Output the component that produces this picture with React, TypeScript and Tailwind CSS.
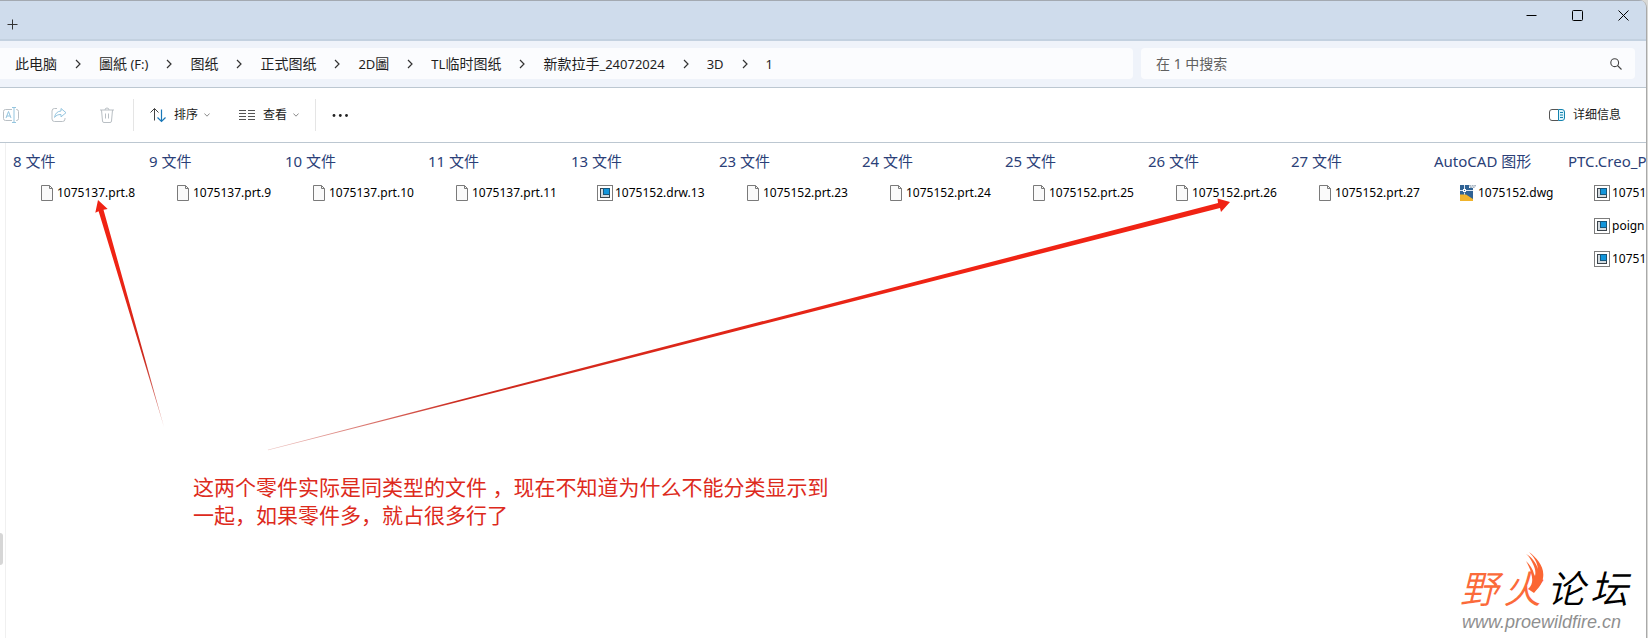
import { Fragment, type ReactNode } from "react";

type FileKind = "blank" | "creo" | "dwg";

type Group = {
    title: string;
    width: string;
    kind: FileKind;
    files: string[];
};

const crumbs = ["此电脑", "圖紙 (F:)", "图纸", "正式图纸", "2D圖", "TL临时图纸", "新款拉手_24072024", "3D", "1"];

const groups: Group[] = [
    { title: "8 文件", width: "w-[136px]", kind: "blank", files: ["1075137.prt.8"] },
    { title: "9 文件", width: "w-[136px]", kind: "blank", files: ["1075137.prt.9"] },
    { title: "10 文件", width: "w-[143px]", kind: "blank", files: ["1075137.prt.10"] },
    { title: "11 文件", width: "w-[143px]", kind: "blank", files: ["1075137.prt.11"] },
    { title: "13 文件", width: "w-[148px]", kind: "creo", files: ["1075152.drw.13"] },
    { title: "23 文件", width: "w-[143px]", kind: "blank", files: ["1075152.prt.23"] },
    { title: "24 文件", width: "w-[143px]", kind: "blank", files: ["1075152.prt.24"] },
    { title: "25 文件", width: "w-[143px]", kind: "blank", files: ["1075152.prt.25"] },
    { title: "26 文件", width: "w-[143px]", kind: "blank", files: ["1075152.prt.26"] },
    { title: "27 文件", width: "w-[143px]", kind: "blank", files: ["1075152.prt.27"] },
    { title: "AutoCAD 图形", width: "w-[134px]", kind: "dwg", files: ["1075152.dwg"] },
    { title: "PTC.Creo_P", width: "w-[136px]", kind: "creo", files: ["10751", "poign", "10751"] },
];

// Latin runs are set one step smaller than the Chinese text next to them
const Mixed = ({ text }: { text: string }) => (
    <>
        {text.split(/([\x20-\x7e]+)/).map((part, i) =>
            i % 2 ? <span key={i} className="text-[13px]">{part}</span> : part
        )}
    </>
);

const ChevronRight = () => (
    <svg className="w-[6px] h-[10px] shrink-0" viewBox="0 0 6 10" fill="none" stroke="#333" strokeWidth="1.2">
        <path d="M1 1l4 4-4 4" />
    </svg>
);

const ChevronDown = () => (
    <svg className="w-[6px] h-[4px] shrink-0" viewBox="0 0 6 4" fill="none" stroke="#8a8a8a" strokeWidth="1">
        <path d="M.4.5L3 3.2 5.6.5" />
    </svg>
);

const FileIcon = ({ kind }: { kind: FileKind }) => {
    if (kind === "creo") {
        return (
            <svg className="w-4 h-4 shrink-0" viewBox="0 0 16 16">
                <rect x=".5" y=".5" width="15" height="15" fill="#fff" stroke="#7c7c7c" />
                <rect x="3.5" y="3.5" width="9" height="9" fill="#d3dbe0" stroke="#3c454c" />
                <rect x="6.5" y="3.5" width="6" height="6" fill="#1296dc" stroke="#17577c" />
            </svg>
        );
    }
    if (kind === "dwg") {
        return (
            <svg className="w-4 h-4 shrink-0" viewBox="0 0 16 16">
                <path d="M0 0h9v3h4v13H0z" fill="#2f6294" />
                <path d="M0 9.5h6L13 14v2H0z" fill="#f0b32b" />
                <path d="M4.500 0v4M4.500 7.500v2M0 5.500h3M6 5.500h7" stroke="#dbe7f2" />
                <rect x="3.500" y="4.500" width="2" height="2" fill="none" stroke="#fff" />
                <path d="M9 .8h7M10 2.200h5" stroke="#8094a8" strokeDasharray="2 .6" />
            </svg>
        );
    }
    return (
        <svg className="w-4 h-4 shrink-0" viewBox="0 0 16 16" fill="#fafafa" stroke="#7a7a7a">
            <path d="M.5.5h8l3 3v12H.5z" />
            <path d="M8.500.5v3h3" fill="none" />
        </svg>
    );
};

const ToolButton = ({ label, children, className = "" }: { label: string; children: ReactNode; className?: string }) => (
    <button type="button" aria-label={label} className={`flex items-center h-8 ${className}`}>
        {children}
    </button>
);

const TitleBar = () => (
    <header className="flex justify-between h-[41px] bg-[#cfdcec] border-t border-t-[#a3a9b1] border-b-2 border-b-[#c3d1e0]">
        <button type="button" aria-label="新建标签页" className="pl-[7px] pt-[8px]">
            <svg className="w-[11px] h-[11px]" viewBox="0 0 11 11" stroke="#333">
                <path d="M5.500.5v10M.5 5.500h10" />
            </svg>
        </button>
        <div className="flex gap-[35px] h-7 pr-[17px] items-center">
            <button type="button" aria-label="最小化">
                <svg className="w-[11px] h-[11px]" viewBox="0 0 11 11" stroke="#000">
                    <path d="M.5 5.500h10" />
                </svg>
            </button>
            <button type="button" aria-label="最大化">
                <svg className="w-[11px] h-[11px]" viewBox="0 0 11 11" stroke="#000" fill="none">
                    <rect x=".5" y=".5" width="10" height="10" rx="1" />
                </svg>
            </button>
            <button type="button" aria-label="关闭">
                <svg className="w-[11px] h-[11px]" viewBox="0 0 11 11" stroke="#000">
                    <path d="M.5.5l10 10M10.500.5l-10 10" />
                </svg>
            </button>
        </div>
    </header>
);

const AddressBar = () => (
    <div className="flex gap-2 h-[47px] pt-[7px] pb-2 pr-[11px] bg-[#eff3fa] border-b border-[#bcc7d1] text-[14px]">
        <nav className="flex grow items-center gap-[18px] pl-[15px] rounded-r bg-[#fbfcfe] text-[#1f1f1f] whitespace-nowrap">
            {crumbs.map((crumb, i) => (
                <Fragment key={crumb}>
                    {i > 0 && <ChevronRight />}
                    <a href="#"><Mixed text={crumb} /></a>
                </Fragment>
            ))}
        </nav>
        <label className="flex w-[494px] shrink-0 items-center pl-[15px] pr-[13px] rounded bg-[#fbfcfe]">
            <input
                type="text"
                aria-label="搜索"
                placeholder="在 1 中搜索"
                className="grow bg-transparent outline-none placeholder:text-[#606060]"
            />
            <svg className="w-3 h-3" viewBox="0 0 12 12" fill="none" stroke="#444" strokeWidth="1.100">
                <circle cx="4.700" cy="4.700" r="3.900" />
                <path d="M7.500 7.500l4 4" />
            </svg>
        </label>
    </div>
);

const Toolbar = () => (
    <div className="flex h-[55px] items-center pl-[3px] pr-[25px] border-b border-[#bcc7d1] bg-white text-xs text-[#1b1b1b]">
        <ToolButton label="重命名">
            <svg className="w-4 h-4" viewBox="0 0 16 16" fill="none" stroke="#b9bfc4">
                <path d="M9 2.500H2.500a2 2 0 0 0-2 2v7a2 2 0 0 0 2 2H9M13 2.500h.5a2 2 0 0 1 2 2v7a2 2 0 0 1-2 2H13" />
                <path d="M3 11l2.500-6.500L8 11M3.800 9h3.400M9 .5h4M11 .5v15M9 15.500h4" stroke="#94c5df" />
            </svg>
        </ToolButton>
        <ToolButton label="共享" className="ml-8">
            <svg className="w-4 h-4" viewBox="0 0 16 16" fill="none" stroke="#b9bfc4" strokeLinejoin="round">
                <path d="M6 1.500H3.500a2.500 2.500 0 0 0-2.500 2.500V12a2.500 2.500 0 0 0 2.500 2.500h8A2.500 2.500 0 0 0 14 12v-1" />
                <path d="M10 1.500l5 4.200-5 4.200V7.500C7 7.400 5 8.400 3.600 10.400 4 6.500 6.500 4.200 10 4z" stroke="#94c5df" />
            </svg>
        </ToolButton>
        <ToolButton label="删除" className="ml-8">
            <svg className="w-4 h-4" viewBox="0 0 16 16" fill="none" stroke="#b9bfc4">
                <path d="M1 3h14M6 3a2 2 0 0 1 4 0M2.500 3l1 11a1.500 1.500 0 0 0 1.500 1.500h6a1.500 1.500 0 0 0 1.500-1.500l1-11M6.500 6.500v5M9.500 6.500v5" />
            </svg>
        </ToolButton>
        <span className="w-px h-8 ml-[18px] mr-4 bg-[#e5e5e5]" />
        <ToolButton label="排序">
            <svg className="w-4 h-4" viewBox="0 0 16 16" fill="none">
                <path d="M4.500 13.500v-12M.5 5.500l4-4 4 4" stroke="#444" />
                <path d="M11.500 2.500v12M7.500 10.500l4 4 4-4" stroke="#1a78b8" strokeWidth="1.200" />
            </svg>
            <span className="ml-2 mr-[6px]">排序</span>
            <ChevronDown />
        </ToolButton>
        <ToolButton label="查看" className="ml-[29px]">
            <svg className="w-4 h-4" viewBox="0 0 16 16" stroke="#555">
                <path d="M0 3.500h7M9 3.500h7M0 6.500h7M9 6.500h7M0 9.500h7M9 9.500h7M0 12.500h7M9 12.500h7" />
            </svg>
            <span className="ml-2 mr-[6px]">查看</span>
            <ChevronDown />
        </ToolButton>
        <span className="w-px h-8 mx-4 bg-[#e5e5e5]" />
        <ToolButton label="更多">
            <svg className="w-4 h-4" viewBox="0 0 16 16" fill="#222">
                <circle cx="2" cy="8.500" r="1.400" />
                <circle cx="8.300" cy="8.500" r="1.400" />
                <circle cx="14.500" cy="8.500" r="1.400" />
            </svg>
        </ToolButton>
        <ToolButton label="详细信息" className="ml-auto gap-2">
            <svg className="w-4 h-4" viewBox="0 0 16 16" fill="none">
                <path d="M9.500 2.500H3a2.500 2.500 0 0 0-2.500 2.500v6A2.500 2.500 0 0 0 3 13.500h6.500" stroke="#555" />
                <path d="M9.500 2.500H13a2.500 2.500 0 0 1 2.500 2.500v6a2.500 2.500 0 0 1-2.500 2.500H9.500zM11 5.500h3M11 8h3M11 10.500h3" stroke="#1583ae" fill="#dff5fc" />
            </svg>
            详细信息
        </ToolButton>
    </div>
);

const Arrows = () => (
    <svg className="absolute top-0 left-0 w-[1300px] h-[320px] pointer-events-none" viewBox="0 143 1300 320">
        <defs>
            <linearGradient id="short" gradientUnits="userSpaceOnUse" x1="164" y1="427" x2="98" y2="200">
                <stop offset="0" stopColor="#c23a30" stopOpacity=".5" />
                <stop offset=".3" stopColor="#cc2a1e" />
                <stop offset=".7" stopColor="#f02314" />
            </linearGradient>
            <linearGradient id="long" gradientUnits="userSpaceOnUse" x1="268" y1="450" x2="1230" y2="202">
                <stop offset="0" stopColor="#c23a30" stopOpacity=".3" />
                <stop offset=".2" stopColor="#cc2a1e" />
                <stop offset=".7" stopColor="#f02314" />
            </linearGradient>
        </defs>
        <path d="M98 200l9.700 9-4.200.8L164 427 98.600 211.200l-3.300 1.500z" fill="url(#short)" />
        <path d="M1230 202l-9 10-1-4L268 450.300l-.2-.6 950.200-246.700-.5-4.500z" fill="url(#long)" />
    </svg>
);

const Watermark = () => (
    <div className="absolute right-[18px] bottom-[6px] w-[168px]">
        <div className="flex items-end justify-between h-11 text-[38px] leading-[48px] italic font-[350]">
            <span className="text-[#fb6a3a]">野</span>
            <span className="relative text-[#fb6a3a]">
                火
                <svg className="absolute left-[22px] -top-[12px] w-[19px] h-[42px]" viewBox="0 0 19 42" fill="#fb6633">
                    <path d="M4 0c8 6 16 15 14 26-1 7-5 10-9 15l-6-4c5-4 5-10 3-16-1-5-3-8-5-12 4 4 7 8 8 13l1 2c1-4 0-8-2-12C6 8 4 4 1 2c6 3 10 9 12 15C12 10 9 5 4 0z" />
                </svg>
            </span>
            <span className="text-black">论</span>
            <span className="text-black">坛</span>
        </div>
        <a href="#" className="block pl-[2px] text-[18px] leading-5 italic text-[#8f8f8f] font-[Liberation_Sans,sans-serif]">
            www.proewildfire.cn
        </a>
    </div>
);

const FilePane = () => (
    <main className="relative flex grow overflow-hidden bg-white">
        <div className="w-[6px] shrink-0 border-r border-[#f0f0f0]" />
        <span className="absolute left-0 top-[390px] w-[3px] h-8 rounded-r-sm bg-[#d6d6d6]" />
        <div className="flex w-0 grow pl-[7px] overflow-hidden">
            {groups.map((group) => (
                <section key={group.title} className={`shrink-0 pt-[6px] ${group.width}`}>
                    <h2 className="h-[27px] text-[15px] leading-6 text-[#2b3f78] whitespace-nowrap">{group.title}</h2>
                    <ul>
                        {group.files.map((file, i) => (
                            <li
                                key={i}
                                className={`flex items-center h-[33px] text-[12px] text-black ${group.kind === "blank" ? "pl-7" : "pl-[26px] gap-[2px]"}`}
                            >
                                <FileIcon kind={group.kind} />
                                {file}
                            </li>
                        ))}
                    </ul>
                </section>
            ))}
        </div>
        <Arrows />
        <p className="absolute left-[193px] top-[330px] text-[21px] leading-7 text-[#dd2a1c] whitespace-nowrap">
            这两个零件实际是同类型的文件 ，现在不知道为什么不能分类显示到
            <br />
            一起，如果零件多，就占很多行了
        </p>
        <Watermark />
    </main>
);

export default function App() {
    return (
        <div lang="zh-CN" className="flex min-h-screen bg-[#d9d9d6] font-['Noto_Sans','Noto_Sans_CJK_SC',sans-serif]">
            <div className="flex flex-col w-0 grow overflow-hidden rounded-tr-lg border-r border-[#a9a9a9]">
                <TitleBar />
                <AddressBar />
                <Toolbar />
                <FilePane />
            </div>
            <div className="w-px shrink-0" />
        </div>
    );
}
